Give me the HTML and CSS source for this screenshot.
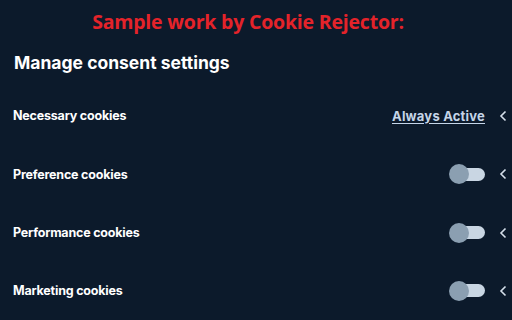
FILE: index.html
```html
<!DOCTYPE html>
<html>
<head>
<meta charset="utf-8">
<link rel="stylesheet" href="styles.css">
</head>
<body>
<div class="page">
  <div class="banner">Sample work by Cookie Rejector:</div>
  <div class="heading">Manage consent settings</div>
  <div class="rows">
    <div class="row">
      <span class="label">Necessary cookies</span>
      <div class="controls">
        <span class="always">Always Active</span>
        <svg class="chev" width="8" height="12" viewBox="0 0 8 12"><polyline points="6.5,1.5 2,6 6.5,10.5" fill="none" stroke="#d5dfea" stroke-width="1.6"/></svg>
      </div>
    </div>
    <div class="row">
      <span class="label">Preference cookies</span>
      <div class="controls">
        <span class="toggle"><span class="knob"></span></span>
        <svg class="chev" width="8" height="12" viewBox="0 0 8 12"><polyline points="6.5,1.5 2,6 6.5,10.5" fill="none" stroke="#d5dfea" stroke-width="1.6"/></svg>
      </div>
    </div>
    <div class="row">
      <span class="label">Performance cookies</span>
      <div class="controls">
        <span class="toggle"><span class="knob"></span></span>
        <svg class="chev" width="8" height="12" viewBox="0 0 8 12"><polyline points="6.5,1.5 2,6 6.5,10.5" fill="none" stroke="#d5dfea" stroke-width="1.6"/></svg>
      </div>
    </div>
    <div class="row">
      <span class="label">Marketing cookies</span>
      <div class="controls">
        <span class="toggle"><span class="knob"></span></span>
        <svg class="chev" width="8" height="12" viewBox="0 0 8 12"><polyline points="6.5,1.5 2,6 6.5,10.5" fill="none" stroke="#d5dfea" stroke-width="1.6"/></svg>
      </div>
    </div>
  </div>
</div>
</body>
</html>
```
FILE: styles.css
```css
html, body {
  margin: 0;
  padding: 0;
  background: #0c1a2b;
}
.page {
  width: 512px;
  height: 320px;
  overflow: hidden;
  background: #0c1a2b;
  display: flex;
  flex-direction: column;
}
.banner {
  height: 44px;
  display: flex;
  align-items: center;
  justify-content: center;
  padding-right: 16px;
  color: #e4232a;
  font-family: "Open Sans", sans-serif;
  font-weight: 700;
  font-size: 19.5px;
  letter-spacing: -0.2px;
}
.heading {
  height: 46px;
  line-height: 42px;
  padding-left: 14px;
  color: #ffffff;
  font-family: "Inter", sans-serif;
  font-weight: 700;
  font-size: 17.5px;
}
.rows {
  display: flex;
  flex-direction: column;
}
.row {
  height: 58.3px;
  display: flex;
  align-items: center;
  justify-content: space-between;
  padding-left: 13px;
  padding-right: 5px;
}
.label {
  color: #ffffff;
  font-family: "Inter", sans-serif;
  font-weight: 700;
  font-size: 12.5px;
  letter-spacing: -0.2px;
}
.controls {
  display: flex;
  align-items: center;
  gap: 14px;
}
.always {
  color: #c5d5e8;
  font-family: "Inter", sans-serif;
  font-weight: 700;
  font-size: 13px;
  letter-spacing: 0.2px;
  text-decoration: underline;
  text-underline-offset: 2px;
}
.toggle {
  position: relative;
  width: 30px;
  height: 13px;
  margin-left: 6px;
  border-radius: 7px;
  background: #c9d6e3;
  display: block;
}
.knob {
  position: absolute;
  left: -6px;
  top: -3.5px;
  width: 20px;
  height: 20px;
  border-radius: 50%;
  background: #8b9fb1;
}
.chev {
  display: block;
}
```
